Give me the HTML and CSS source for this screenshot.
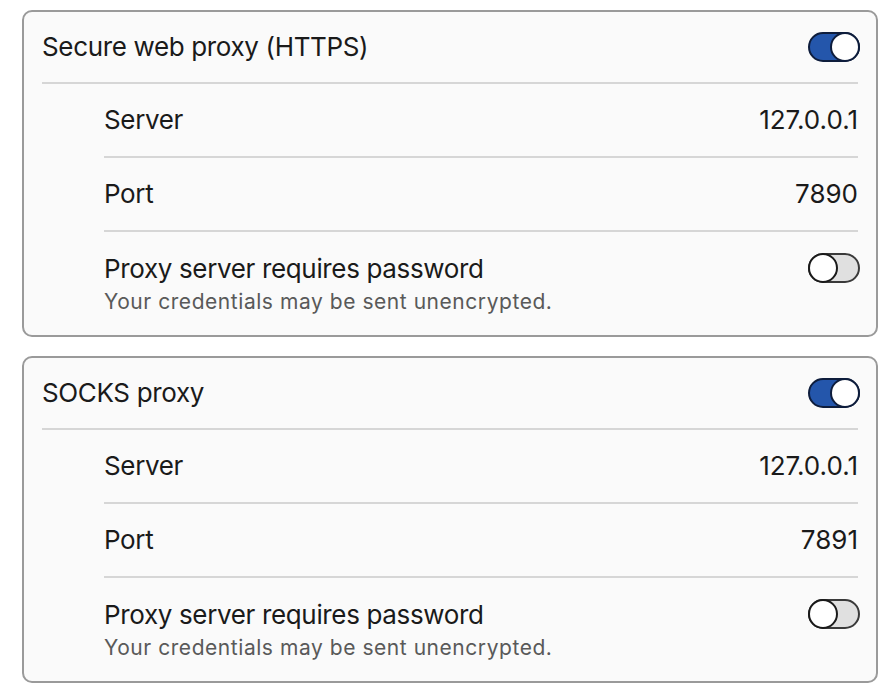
FILE: index.html
```html
<!DOCTYPE html>
<html>
<head>
<meta charset="utf-8">
<link rel="stylesheet" href="styles.css">
</head>
<body>
<div class="page">
  <section class="card">
    <div class="head">
      <span class="label">Secure web proxy (HTTPS)</span>
      <span class="toggle on"><span class="knob"></span></span>
    </div>
    <div class="row">
      <span class="label">Server</span>
      <span class="value">127.0.0.1</span>
    </div>
    <div class="row">
      <span class="label">Port</span>
      <span class="value">7890</span>
    </div>
    <div class="row tall">
      <div class="text">
        <span class="label">Proxy server requires password</span>
        <span class="sub">Your credentials may be sent unencrypted.</span>
      </div>
      <span class="toggle off"><span class="knob"></span></span>
    </div>
  </section>
  <section class="card">
    <div class="head">
      <span class="label">SOCKS proxy</span>
      <span class="toggle on"><span class="knob"></span></span>
    </div>
    <div class="row">
      <span class="label">Server</span>
      <span class="value">127.0.0.1</span>
    </div>
    <div class="row">
      <span class="label">Port</span>
      <span class="value">7891</span>
    </div>
    <div class="row tall">
      <div class="text">
        <span class="label">Proxy server requires password</span>
        <span class="sub">Your credentials may be sent unencrypted.</span>
      </div>
      <span class="toggle off"><span class="knob"></span></span>
    </div>
  </section>
</div>
</body>
</html>
```
FILE: styles.css
```css
* { box-sizing: border-box; }
html, body { margin: 0; padding: 0; background: #ffffff; }
body {
  font-family: Inter, "Liberation Sans", sans-serif;
  color: #1a1a1a;
  -webkit-font-smoothing: antialiased;
}
.page {
  padding: 10px 18px 0 22px;
  display: flex;
  flex-direction: column;
  gap: 19px;
}
.card {
  background: #fafafa;
  border: 2px solid #9a9a9a;
  border-radius: 10px;
  padding: 0 18px;
}
.head {
  height: 72px;
  display: flex;
  align-items: center;
  justify-content: space-between;
  border-bottom: 2px solid #d6d6d6;
}
.row {
  margin-left: 62px;
  height: 74px;
  display: flex;
  align-items: center;
  justify-content: space-between;
  border-bottom: 2px solid #d6d6d6;
}
.row.tall {
  border-bottom: none;
  height: 103px;
  align-items: flex-start;
  padding-top: 21px;
}
.label, .value {
  font-size: 26px;
  line-height: 32px;
  letter-spacing: -0.35px;
}
.value { letter-spacing: 0; }
.text { display: flex; flex-direction: column; }
.sub {
  font-size: 21px;
  line-height: 28px;
  margin-top: 3px;
  color: #595959;
  letter-spacing: 0.55px;
}
.toggle {
  width: 52px;
  height: 30px;
  margin-right: -2px;
  border-radius: 15px;
  border: 2px solid #222;
  display: flex;
  align-items: center;
  flex: none;
}
.toggle.on {
  background: #2456ab;
  border-color: #0e1d3c;
  justify-content: flex-end;
}
.toggle.off {
  background: #e0e0e0;
  border-color: #3a3a3a;
  justify-content: flex-start;
}
.knob {
  width: 30px;
  height: 30px;
  margin: -2px;
  border-radius: 50%;
  background: #ffffff;
  border: 2px solid #1a1a1a;
  flex: none;
}
.toggle.on .knob { border-color: #0e1d3c; }
```
